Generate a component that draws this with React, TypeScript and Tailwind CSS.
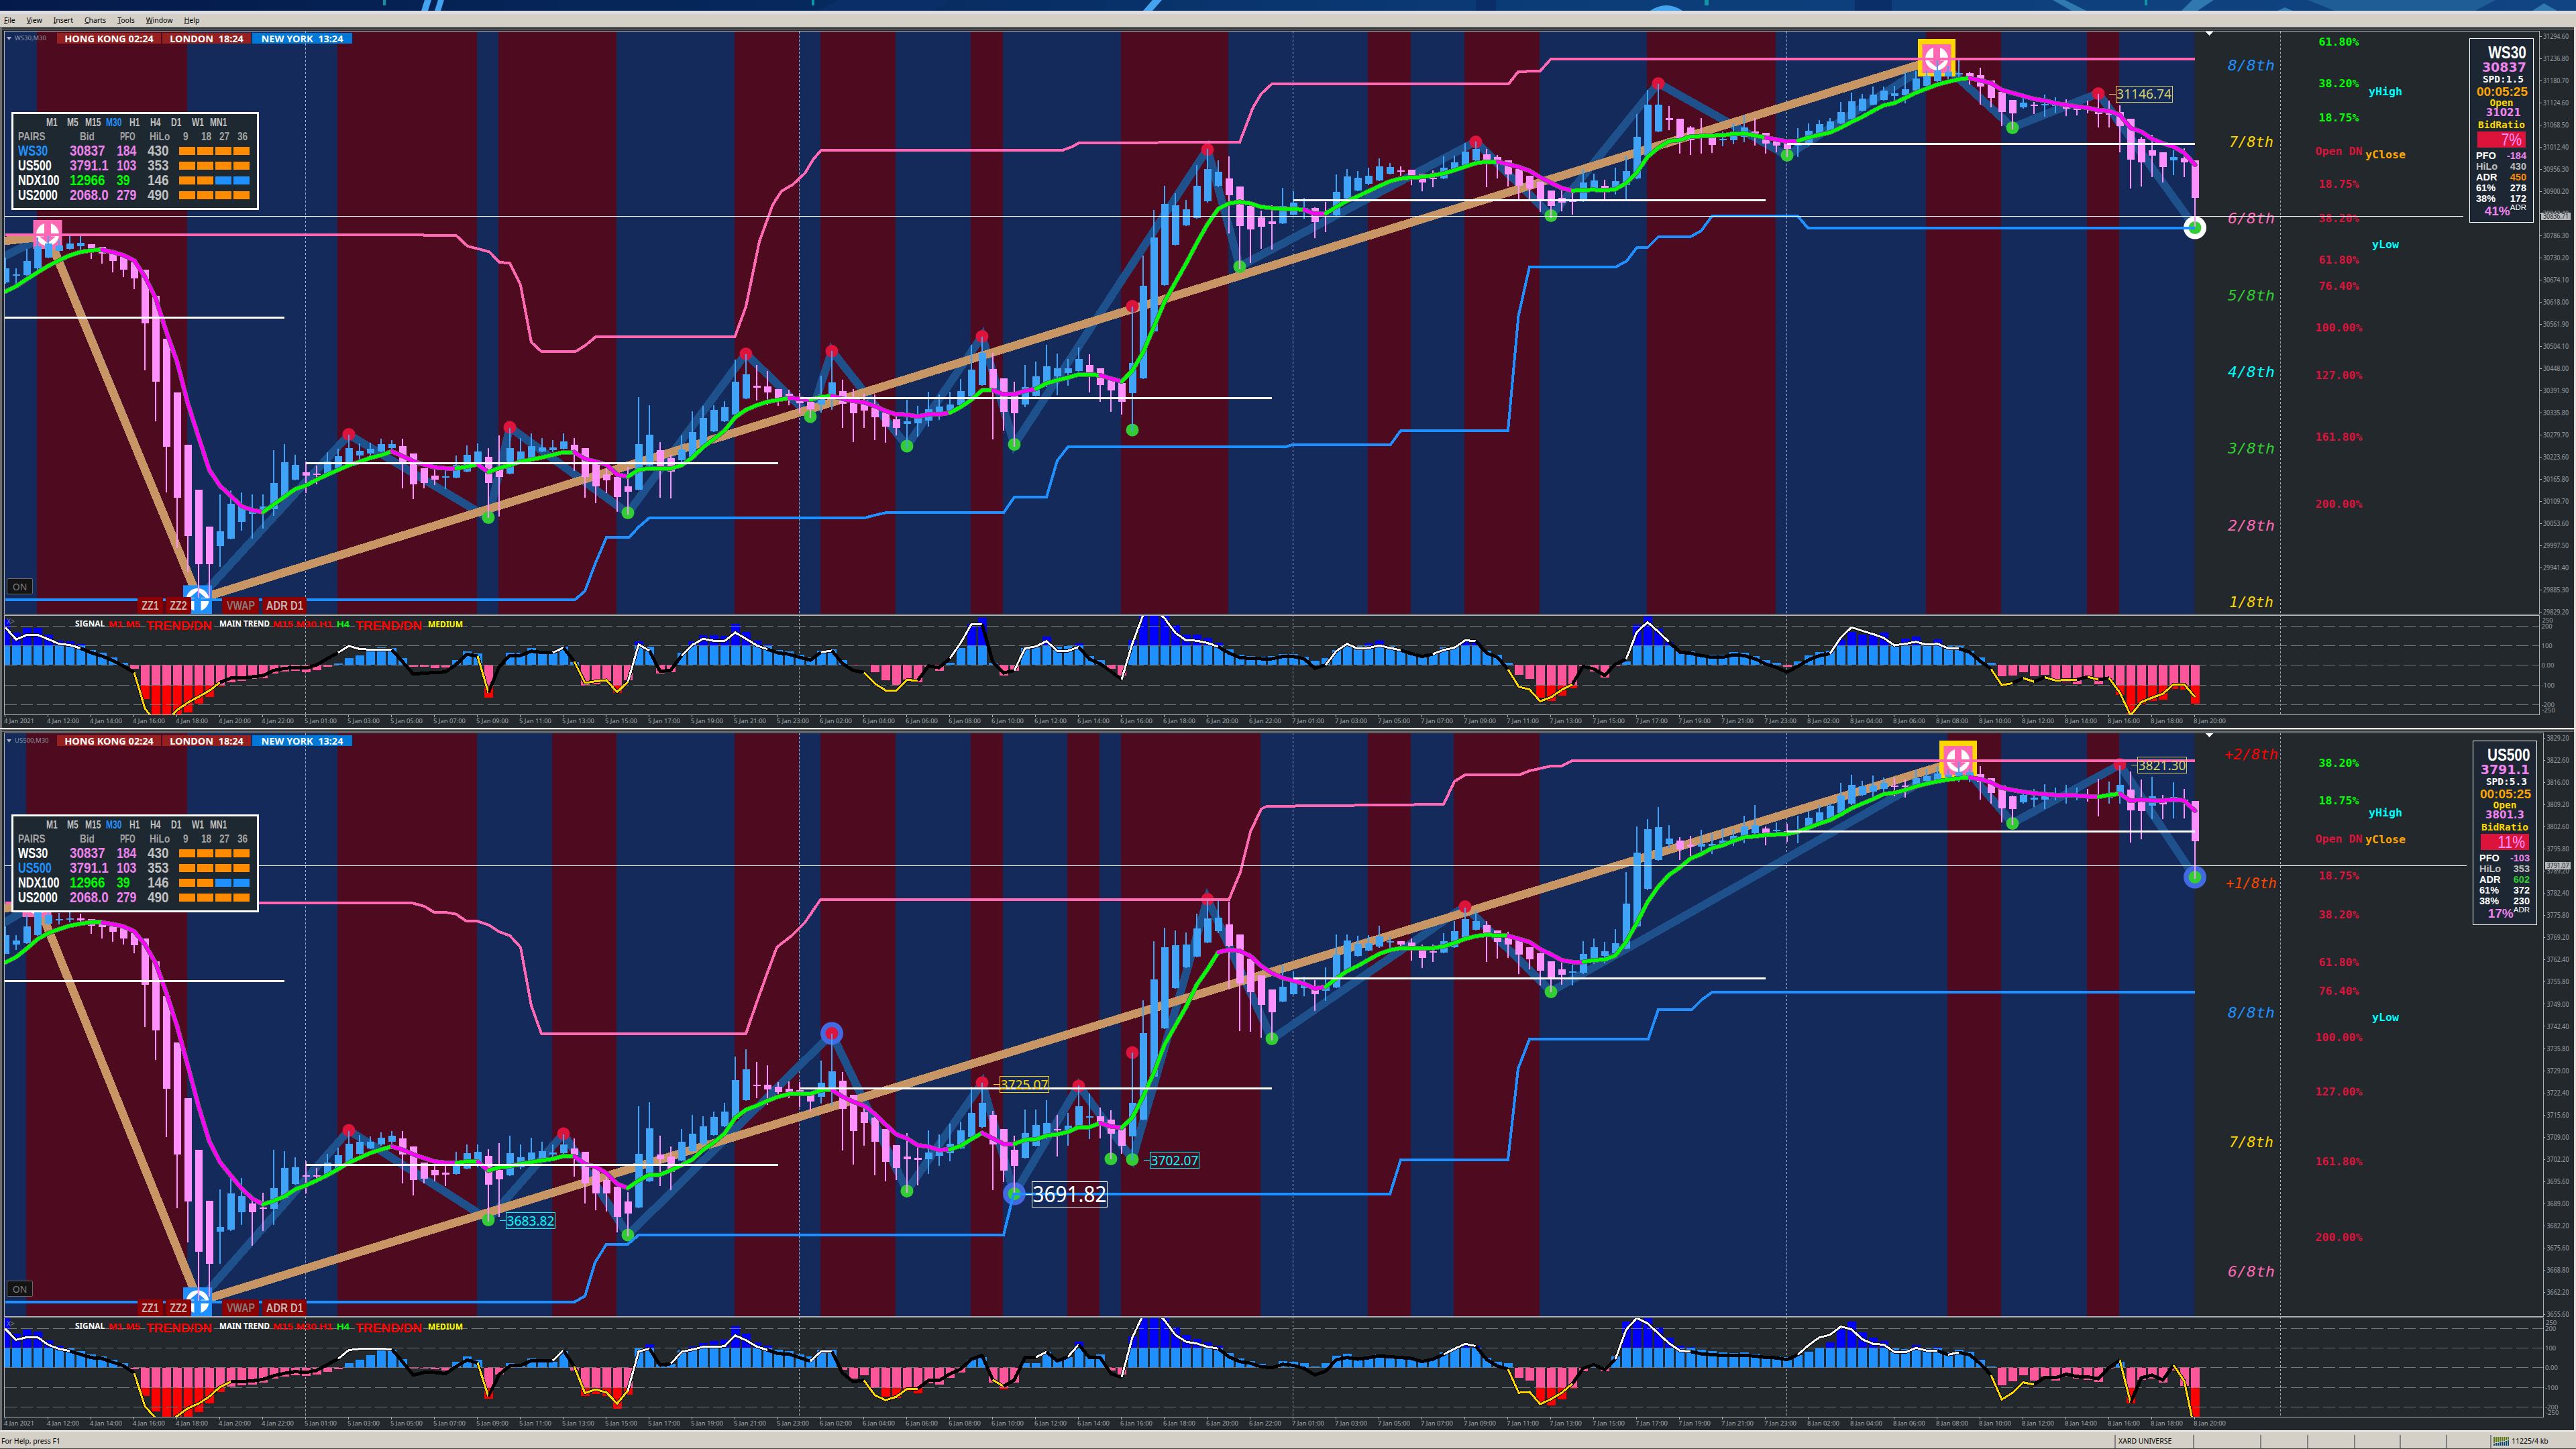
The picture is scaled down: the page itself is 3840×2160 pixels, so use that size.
import { clsx } from 'clsx'
import type { ReactNode } from 'react'

const SANS = '"Noto Sans", "Open Sans", sans-serif'
const ARIAL = '"Liberation Sans", Arial, sans-serif'
const MONO = '"DejaVu Sans Mono", monospace'

const COLORS: Record<string, string> = {
  g: '#00ff00',
  m: '#ff00ff',
  w: '#ffffff',
  k: '#000000',
  y: '#ffd700',
}

// Every block continues where the previous one stopped, one entry per M30 bar.
// y = base + value / scale
interface Block {
  base: number
  scale: number
  data: string
}

interface Candle {
  up: boolean
  high: number
  top: number
  bottom: number
  low: number
}

type Point = [number, number]

interface PriceTag {
  x: number
  y: number
  w: number
  h: number
  size: number
  color: string
  text: string
}

interface ChartConfig {
  symbol: string
  frameTop: number
  plotTop: number
  plotBottom: number
  subBottom: number
  right: number
  bands: Point[]
  candles: Block[]
  ma: Block[]
  hist: Block[]
  signal: Block[]
  levels: number[]
  upper: Point[]
  lower: Point[]
  major: Point[]
  minor: Point[]
  highs: Point[]
  lows: Point[]
  rings: [number, number, string][]
  opens: [number, number, number][]
  bid: number
  bidEnd: number
  bidText: string
  peak: Point
  start: Point
  bottomMark: Point
  tags: PriceTag[]
  murrey: [string, number, string, number][]
  fibs: [string, number, string][]
  yLabels: [string, number, string][]
  prices: string[]
  info: InfoData
}

interface InfoData {
  last: string
  spread: string
  open: string
  ratio: string
  pfo: string
  hilo: string
  adr: string
  adrClass: string
  r61: string
  r38: string
  pct: string
}

const barX = (i: number) => 8 + i * 16

function parseCandles(blocks: Block[]): Candle[] {
  return blocks.flatMap((b) =>
    b.data.trim().split(/\s+/).map((item) => {
      const [high, top, bottom, low] = item.slice(1).split(',').map((v) => b.base + Number(v) / b.scale)
      return { up: item[0] === 'u', high, top, bottom, low }
    })
  )
}

function parseValues(blocks: Block[]): number[] {
  return blocks.flatMap((b) => b.data.trim().split(/\s+/).map((v) => b.base + Number(v) / b.scale))
}

// A letter in the data switches the colour from the previous point on
function parseRuns(blocks: Block[]) {
  const runs: { color: string; points: Point[] }[] = []
  let last: Point | null = null
  let i = 0
  for (const b of blocks) {
    for (const token of b.data.trim().split(/\s+/)) {
      if (COLORS[token]) {
        runs.push({ color: COLORS[token], points: last ? [last] : [] })
        continue
      }
      last = [barX(i), b.base + Number(token) / b.scale]
      runs[runs.length - 1].points.push(last)
      i++
    }
  }
  return runs
}

const pts = (p: Point[]) => p.map(([x, y]) => `${x},${y.toFixed(1)}`).join(' ')

const ws30: ChartConfig = {
  symbol: 'WS30',
  frameTop: 40,
  plotTop: 47,
  plotBottom: 915,
  subBottom: 1065,
  right: 3785.5,
  bands: [[3, 17], [31, 44], [46, 57], [68, 74], [76, 83], [90, 93], [104, 114], [127, 131], [136, 143], [153, 165], [179, 186], [194, 197]],
  candles: [
    {
      base: 0, scale: 2.8,
      data: `u1075,1120,1180,1185 u1120,1145,1150,1187 u1040,1090,1147,1150 u990,1028,1120,1125 u985,1017,1075,1078 u1000,1025,1047,1050
      u985,1017,1038,1042 u985,1014,1028,1042 d1019,1019,1042,1080 d1030,1030,1058,1100 d1045,1052,1088,1137 d1060,1070,1126,1156
      d1090,1096,1162,1207 d1125,1126,1350,1546 d1235,1235,1592,1758 d1414,1414,1864,2055`,
    },
    {
      base: 560, scale: 2.904,
      data: `d73,73,528,745 d299,299,694,850 d494,494,815,960 d653,653,815,975 u514,674,738,828 u496,555,706,708 u505,560,633,671 u514,580,598,706
      u514,566,590,662 u322,465,578,607 u296,375,522,523 u343,386,450,453 d372,418,433,508 d388,424,430,470 u331,373,428,430 u317,348,400,402
      u256,314,378,380 u293,325,346,365 u290,317,337,348 u272,296,328,330 u278,296,314,330 d272,305,378,487 d337,337,470,534 d401,401,465,487
      d404,433,450,473 u401,436,440,490 u346,386,441,444 u302,343,415,418 u293,328,375,380 d314,351,465,615 d258,400,438,610 u226,314,425,427
      u270,328,380,382 u250,305,365,368 u270,311,328,330 u278,311,321,330 u250,285,317,320 d270,299,330,412 d314,314,438,528 d372,372,479,552
      d401,428,453,508 d438,438,526,590 d395,479,502,600 u93,296,494,497 u128,256,390,395 d287,322,395,528 d343,357,415,531 u258,320,365,390
      u154,244,357,360 u131,183,305,308 u128,148,241,244 u110,136,197,200`,
    },
    {
      base: 360, scale: 2.119,
      data: `u373,443,546,548 u355,420,495,497 d390,456,462,502 d409,458,477,516 d466,466,493,519 d468,481,492,516 d479,495,511,542 d506,506,530,558
      u424,483,515,540 u345,445,485,532 d436,473,513,589 d466,498,542,634 d480,502,534,589 d484,515,555,627 d530,540,585,636 d550,562,589,612
      u500,568,576,655 u519,550,574,617 u475,530,566,585 u484,521,545,563 u475,515,540,543 u434,473,517,520 u326,405,490,492 u300,351,453,455
      d352,403,464,625 d432,432,538,598 d443,487,542,648 u390,460,515,523 u379,426,487,490 u326,394,450,460 u354,400,426,485 u371,400,415,456
      u335,371,409,412 d356,390,418,477 d400,400,453,506 d432,432,470,538 d447,447,506,547 u205,384,479,600 u44,140,432,434`,
    },
    {
      base: 160, scale: 1.7043,
      data: `u260,330,570,572 u200,245,452,454 u218,249,349,351 u236,259,300,302 u147,199,281,283 u105,157,239,242 u135,164,199,202 d124,181,223,320
      d201,201,302,410 d250,251,310,395 d262,280,303,360 d249,290,297,361 u205,251,295,297 u213,242,273,275 u230,255,260,283 d254,256,291,332
      d240,266,270,317 u170,215,275,278 u157,176,231,233 u162,179,211,213 u154,174,194,197 u130,150,185,187 u141,152,168,170 d150,160,163,174
      d159,159,176,197 d168,168,191,213 d160,179,182,202 u125,154,181,183 u123,140,163,166 u90,112,147,148 u87,106,134,136`,
    },
    {
      base: 0, scale: 2.8,
      data: `d622,644,672,781 d647,655,685,745 d669,669,727,778 d705,705,775,832 d734,734,787,837 d758,758,835,885 d795,795,860,910 d795,826,846,882
      d800,836,843,896 u706,762,838,843 u725,753,790,795 d750,776,787,835 u700,756,787,812 u650,714,773,835 u476,571,745,748 u375,437,650,653
      u350,437,549,552 d443,493,500,543 d496,496,580,641 d527,532,585,647 d493,557,565,641 d560,570,605,638 u549,580,585,610 u515,560,585,602
      u482,532,571,594 d493,549,557,608 d554,554,599,641 d585,588,608,636 d590,590,622,655 u535,603,608,655 u515,546,605,608 u501,518,560,574
      u493,507,545,550 u426,468,515,518 u387,423,498,500 u392,412,462,465 u361,395,437,440 u361,378,417,420 u358,389,400,423 u300,372,397,431
      u297,328,378,381 u294,316,357,364 u252,294,339,342 u275,300,318,336 u252,305,311,322 d300,305,325,353 d283,314,361,437 d336,336,409,448
      d380,384,468,526 d417,417,473,540 u409,428,448,454 d426,437,442,476 u395,434,440,487 u406,437,440,470 d414,440,454,484 d437,445,459,482
      d420,448,450,473 d392,452,476,532 d420,468,479,532 d440,468,526,636 d496,496,666,787 d571,580,678,778 d563,627,650,739 d636,636,697,762
      u627,655,669,731 d619,661,678,739 d669,669,826,945`,
    },
  ],
  ma: [
    { base: 0, scale: 2.8, data: 'g 1217 1195 1165 1137 1110 1087 1066 1052 1045 1043 m 1052 1065 1087 1155 1245 1385 1510' },
    {
      base: 560, scale: 2.904,
      data: `120 265 408 477 520 565 582 591 g 558 525 491 476 450 429 408 388 373 356 344 328 m 348 370 385 397 401 401 g 394 384 m 418 g 400 388 372
      363 354 343 331 331 m 360 372 385 428 437 g 408 401 403 402 388 355 310 275 238 180 148 128 113 105 97`,
    },
    {
      base: 360, scale: 2.119,
      data: `m 497 500 g 491 488 m 497 504 508 520 535 546 547 553 546 546 541 g 523 500 470 470 m 483 483 472 466 g 448 438 430 420 421 422 m 433 442
      g 408 350 270 190 130 70 5`,
    },
    { base: 160, scale: 1.7043, data: '297 258 244 240 244 253 256 258 258 260 m 271 270 g 253 238 226 213 200 188 181 178 177 173 168 160 151 142 138 138' },
    {
      base: 0, scale: 2.8,
      data: `m 686 697 713 740 763 785 796 g 793 792 795 790 765 720 655 617 589 585 570 568 566 565 558 557 566 574 m 582 591 588 g 574 563 553 533 509
      488 463 440 430 409 387 370 353 341 331 326 m 336 347 375 388 400 413 420 431 438 445 450 460 463 480 534 549 580 598 612 638 688`,
    },
  ],
  hist: [
    {
      base: 560, scale: 2.904,
      data: `1055 1112 1091 1091 1121 1147 1149 1163 1188 1200 1221 1243 1269 1399 1467 1467 1467 1457 1420 1390 1346 1326 1320 1314 1309 1290 1281 1278
      1283 1275 1259 1246 1222 1211 1188 1176 1180 1222 1260 1260 1265 1262 1231 1193 1202 1393 1253 1199 1199 1179 1197 1197 1173 1240 1343 1335 1322
      1375 1318 1150 1173 1288 1283 1200 1150 1124 1124 1127 1074 1109 1147 1164 1188 1193 1208 1220 1190 1186`,
    },
    {
      base: 360, scale: 2.119,
      data: `1322 1340 1338 1361 1385 1401 1383 1393 1343 1357 1331 1284 1207 1189 1330 1370 1357 1285 1283 1249 1279 1278 1269 1309 1322 1350 1372 1259
      1180 1180 1180 1212 1242 1241 1253 1268 1288 1306 1309 1312 1309 1303 1304 1312 1324 1316 1290 1275 1278 1270 1261 1277 1288 1300 1308 1298 1282
      1280 1266 1265 1293 1305`,
    },
    {
      base: 160, scale: 1.7043,
      data: `1411 1441 1452 1500 1508 1495 1476 1420 1433 1449 1420 1408 1314 1293 1325 1358 1382 1383 1390 1391 1391 1384 1385 1394 1405 1412 1422 1408
      1392 1384 1380 1352 1333 1339 1340 1335 1362 1350 1345 1362 1351 1366 1368 1380 1397 1411 1446 1444 1435 1446 1442 1452 1460 1466 1452 1466 1455
      1493 1540 1515 1509 1505 1478 1480 1515`,
    },
  ],
  signal: [
    {
      base: 560, scale: 2.904,
      data: `w 1090 1142 1122 1122 1141 1161 1166 1180 k 1199 1214 1233 1257 1285 y 1440 1500 1500 1447 1415 1390 1364 1328 k 1309 1309 1304 1298 1276
      1267 1264 1266 1252 1225 1199 w 1170 1183 1186 1186 1186 k 1238 1292 1288 1285 1283 1250 1206 1214 y 1372 k 1260 1211 1211 1193 1198 1199 w 1177
      k 1237 y 1330 1323 1318 1370 1325 w 1164 1190 k 1280 1275 1212 w 1166 1139 1148 1149 1112 1139 1168 1184 k 1200 1206 1219 1232 1197 w 1190`,
    },
    {
      base: 360, scale: 2.119,
      data: `k 1333 1355 1361 y 1396 1418 1418 1385 1387 k 1341 1346 1317 w 1268 1209 1209 k 1328 1363 1355 w 1285 1279 1262 1293 1293 1281 k 1319 1334
      1358 1383 w 1270 1180 1160 1190 1236 1260 1261 1268 1280 k 1300 1314 1317 1318 1318 1311 1311 1318 1348 1338 w 1294 1271 1286 1284 1276 1284 1291
      k 1302 1311 1303 w 1290 1283 1260 1262 k 1300 1313`,
    },
    {
      base: 160, scale: 1.7043,
      data: `1428 y 1472 1479 1509 1499 1480 1466 k 1420 1427 1443 1415 1402 w 1333 1308 1332 1358 k 1384 1387 1393 1397 1397 1391 1393 1401 1414 1423
      1435 1420 1404 1393 1388 w 1347 1321 1330 1338 1348 1367 1363 1358 1365 1363 1374 1375 k 1384 1407 1427 y 1468 1463 k 1450 y 1459 k 1448 y 1456
      1455 1454 k 1447 y 1454 k 1450 y 1487 1545 1511 1500 1490 1466 1466 1498`,
    },
  ],
  levels: [933.4, 962.3, 991.3, 1021.5, 1050.4],
  upper: [
    [8, 350], [631, 350], [632, 351], [680, 351], [697, 367], [712, 370.7], [729.5, 375.4], [744, 390.7], [760, 392.5], [776, 425], [792, 510], [807, 524],
    [858, 524], [873, 514.6], [888, 502], [1095.5, 502], [1112, 457], [1132, 360], [1152, 305], [1165, 285], [1182, 275], [1200, 258], [1212, 238],
    [1224, 224], [1584, 224], [1600, 218], [1608, 213], [1848, 212], [1868, 160], [1880, 140], [1896, 125], [2249, 125], [2263, 107], [2296, 105.7],
    [2312, 87.8], [3272, 87.8],
  ],
  lower: [
    [8, 894], [857, 894], [872, 881], [887, 841], [904, 801], [938, 801], [952, 785.6], [968, 772], [1289, 772], [1304, 768], [1320, 764.4], [1496, 764.4],
    [1512, 741], [1560, 741], [1576, 686.6], [1592, 666], [1917, 666], [1928, 662.5], [2073, 662.5], [2088, 642], [2248, 642], [2263.5, 471],
    [2280, 397.8], [2409, 397.8], [2425, 389], [2440, 369], [2456, 369], [2472, 353], [2520, 353], [2536, 344], [2552, 322], [2680, 322], [2695, 340],
    [3272, 340],
  ],
  major: [[-10, 361], [72, 352], [296, 893], [2888, 88]],
  minor: [
    [-10, 390], [72, 350], [296, 893], [520, 648], [728, 772], [760, 637], [936, 765], [1112, 527], [1208, 621], [1240, 523], [1352, 665], [1464, 501],
    [1512, 663], [1800, 222], [1848, 397], [2200, 211], [2312, 322], [2472, 124], [2664, 232], [2888, 88], [3000, 190], [3128, 139], [3272, 339],
  ],
  highs: [[520, 647.5], [760, 637], [1112, 527.5], [1240, 523.5], [1464, 501.5], [1688, 456.5], [1800, 223], [2200, 211.5], [2472, 124.5], [3128, 139.5]],
  lows: [[728, 771.5], [936, 764.5], [1208, 621], [1352, 665], [1512, 662.5], [1688, 641], [1848, 397.5], [2312, 321.5], [2664, 231.5], [3000, 190.5], [3272, 339.5]],
  rings: [[3272, 339.5, '#ffffff']],
  opens: [[7, 424, 473.6], [456, 1160, 690.5], [1192, 1896, 593.6], [1928, 2632, 298.5], [2664, 3272, 214.5]],
  bid: 322.5,
  bidEnd: 3672,
  bidText: '30836.71',
  peak: [2887, 87.5],
  start: [71, 349.5],
  bottomMark: [294.5, 894],
  tags: [{ x: 3154, y: 128, w: 84, h: 24.5, size: 20, color: '#d6cf66', text: '31146.74' }],
  murrey: [
    ['8/8th', 97, '#1e90ff', 3321], ['7/8th', 211, '#ffd700', 3323], ['6/8th', 325.5, '#ff69b4', 3321], ['5/8th', 440, '#32cd32', 3321],
    ['4/8th', 554, '#00ffff', 3321], ['3/8th', 668, '#32cd32', 3321], ['2/8th', 783, '#ff69b4', 3321], ['1/8th', 897, '#ffd700', 3323],
  ],
  fibs: [
    ['61.80%', 62.5, '#00ff00'], ['38.20%', 124.5, '#00ff00'], ['18.75%', 175.5, '#00ff00'], ['Open DN', 225.7, '#dc143c'], ['18.75%', 274, '#dc143c'],
    ['38.20%', 325, '#dc143c'], ['61.80%', 387, '#dc143c'], ['76.40%', 426, '#dc143c'], ['100.00%', 488.3, '#dc143c'], ['127.00%', 559.3, '#dc143c'],
    ['161.80%', 651, '#dc143c'], ['200.00%', 751, '#dc143c'],
  ],
  yLabels: [['yHigh', 136, '#00ffff'], ['yClose', 230.5, '#ffa500'], ['yLow', 364.7, '#00ffff']],
  prices: [
    '31294.60', '31236.80', '31180.70', '31124.60', '31068.50', '31012.40', '30956.30', '30900.20', '30842.40', '30786.30', '30730.20', '30674.10',
    '30618.00', '30561.90', '30504.10', '30448.00', '30391.90', '30335.80', '30279.70', '30223.60', '30165.80', '30109.70', '30053.60', '29997.50',
    '29941.40', '29885.30', '29829.20',
  ],
  info: {
    last: '30837', spread: '1.5', open: '31021', ratio: '7%', pfo: '-184', hilo: '430', adr: '450', adrClass: 'text-[#ff8c00]', r61: '278', r38: '172',
    pct: '41%',
  },
}

const us500: ChartConfig = {
  symbol: 'US500',
  frameTop: 1087,
  plotTop: 1093,
  plotBottom: 1962,
  subBottom: 2112,
  right: 3791,
  bands: [[2, 17], [31, 44], [51, 57], [68, 74], [76, 83], [90, 93], [99, 102], [104, 117], [127, 131], [135, 143], [181, 186], [194, 197]],
  candles: [
    {
      base: 1060, scale: 3,
      data: `u962,1002,1085,1087 u1002,1026,1043,1067 u910,963,1037,1040 u880,890,1001,1004 u895,912,951,957 u903,930,933,954 u900,928,933,945
      d906,927,936,950 d930,930,960,996 d950,954,966,1017 d960,962,987,1032 d970,972,1017,1044 d990,993,1047,1083 d1016,1017,1223,1412
      d1119,1119,1429,1560 d1275,1275,1690,1905`,
    },
    {
      base: 1480, scale: 2.306,
      data: `d170,171,556,740 d362,362,717,858 d540,540,891,1058 d715,715,932,1045 u676,805,822,932 u632,689,815,818 u637,699,754,797 d705,723,754,869
      d687,738,742,819 u540,671,742,797 u544,602,705,708 u565,600,657,660 d579,627,630,689 d602,627,632,643 u554,584,628,630 u533,558,606,608
      u475,519,583,585 u489,512,553,556 u493,512,535,538 u480,498,522,526 u475,491,512,535 d475,500,556,655 d528,528,643,696 d583,583,639,655
      d590,609,627,648 d590,618,625,664 u547,588,623,626 u521,551,604,606 u521,546,595,600 d537,560,659,787 d517,609,641,770 u491,551,627,630
      u521,565,600,606 u498,549,580,584 u512,544,570,574 u521,549,556,565 u487,521,552,556 d500,535,558,632 d546,546,655,724 d602,602,689,747
      d632,643,689,752 d666,666,770,823 d684,717,759,836 u390,553,738,740 u376,466,648,650 d491,556,572,664 d528,563,616,678 u468,512,576,579
      u420,484,544,546 u424,459,520,523 u408,427,489,491 u378,408,459,461 u220,300,434,436 u194,263,369,371 d238,316,318,362 d249,316,332,385
      d307,323,341,355 d304,330,341,362 d307,334,341,392 d341,346,374,408`,
    },
    {
      base: 1320, scale: 1.96,
      data: `u512,576,617,637 u434,543,590,643 d545,570,653,774 d612,612,717,815 d645,662,694,760 d677,678,749,847 d711,711,808,864 d758,759,825,860
      d723,792,799,898 d762,796,801,876 u715,780,800,843 u727,770,790,819 u696,755,782,806 u690,715,768,770 u588,664,735,738 u577,635,706,709
      d659,670,757,890 d711,711,833,866 d731,772,819,901 u655,723,796,798 u655,700,760,763 u627,694,737,740 d670,711,715,792 u664,702,720,760
      u585,645,706,708 u608,674,677,741 d649,674,694,739 d657,684,725,800 d706,708,760,784 u488,635,733,803 u335,431,684,686 u163,274,558,561
      u123,180,417,419 u131,174,300,302 u138,172,239,241 u82,125,207,210 u42,96,167,169 u42,94,133,139 d48,114,176,302 d143,143,286,425
      d212,214,312,427 d262,263,349,445 d303,304,370,453 u233,296,339,341 u250,278,318,320 u266,288,300,323 d276,300,318,367 u239,293,308,337
      u143,202,298,300 u143,160,250,252 u147,171,206,208 u145,168,190,192 u118,149,179,182 u151,163,167,184 d163,163,172,180 d155,167,178,220
      d173,176,212,241 d172,193,196,223 u139,163,196,198 u104,133,180,182 u64,98,155,157 u74,104,129,131 d104,116,142,223 d131,131,165,214
      d135,151,172,212`,
    },
    {
      base: 1100, scale: 1.4792,
      data: `d445,445,478,520 d462,462,488,510 d474,475,513,546 d492,493,528,560 d495,510,522,544 u500,515,518,546 u448,476,518,520 u442,462,496,499
      u449,470,481,497 u422,453,475,478 u296,365,464,466 u195,253,415,418 u179,201,333,336 u152,197,269,271 u192,222,234,243 d219,226,246,269
      d216,235,240,262 u203,234,239,251 u211,234,238,256 u200,226,235,243 u201,216,226,238 u172,195,217,232 u148,192,210,213 d195,200,210,237
      u186,203,206,216 d190,205,208,229 u171,202,208,232 u161,176,200,205 u148,164,186,189 u144,150,178,181 u99,127,165,168 u81,104,145,148
      u95,107,125,128 u83,105,119,130 u88,99,112,125 d89,105,108,129 d91,105,108,132 u71,89,105,108 u68,84,95,103 u62,78,92,95 u70,82,86,98
      u53,75,86,98 u68,76,86,97 d62,80,98,136 d89,89,122,145 d104,105,155,186 d127,129,157,192 u121,126,142,145 u112,132,136,152 u102,124,136,157
      u109,127,129,138 u104,127,129,145 u110,126,128,137 d113,124,126,140 d90,124,127,173 u96,122,131,145 u60,104,125,145 d74,114,160,231
      d92,135,161,223 u86,129,149,179 d126,141,146,179 u98,130,133,178 d112,136,139,178 d139,139,228,311`,
    },
  ],
  ma: [
    { base: 1060, scale: 3, data: 'g 1124 1100 1062 1020 993 975 960 951 944 945 m 953 963 985 1043 1127 1260' },
    {
      base: 1480, scale: 2.306,
      data: `115 250 390 510 582 628 672 707 727 g 715 700 676 662 645 627 606 584 567 551 539 528 m 539 555 568 580 584 585 g 580 580 m 611 g 600 596 588
      582 576 571 561 562 m 588 598 620 657 671 g 645 625 625 610 592 573 540 515 484 430 402 388 371 357 348 347 347`,
    },
    {
      base: 1320, scale: 1.96,
      data: `598 597 m 617 632 643 667 698 727 739 759 763 773 771 g 761 741 723 m 739 755 755 g 743 742 731 727 720 706 706 694 m 704 708 g 678 617 548
      465 410 355 290 245 195 m 188 191 206 235 256 270 278 287 301 296 g 272 250 235 217 200 189 183 183 183 183 178 168 156 148 144 146 147`,
    },
    {
      base: 1100, scale: 1.4792,
      data: `m 443 450 466 477 490 494 494 g 490 489 480 450 408 362 328 302 286 266 256 243 237 227 219 217 214 213 212 207 198 189 181 169 155 145 135
      124 121 115 107 101 96 92 89 87 m 91 98 110 115 119 122 124 126 127 127 129 130 g 126 123 m 139 136 138 138 136 138 161`,
    },
  ],
  hist: [
    {
      base: 1480, scale: 2.306,
      data: `1118 1171 1157 1164 1194 1214 1222 1231 1244 1251 1261 1274 1294 1385 1438 1457 1457 1457 1441 1411 1371 1354 1349 1347 1339 1326 1319 1314
      1316 1312 1303 1293 1273 1261 1245 1228 1227 1259 1291 1291 1294 1298 1268 1250 1262 1396 1312 1273 1275 1257 1264 1268 1232 1298 1387 1380 1385
      1430 1381 1222 1208 1277 1275 1229 1215 1204 1197 1192 1147 1171 1201 1213 1226 1231 1242 1251`,
    },
    {
      base: 1320, scale: 1.96,
      data: `1357 1356 1415 1440 1430 1468 1493 1497 1478 1483 1455 1458 1439 1423 1385 1378 1453 1471 1452 1396 1396 1363 1385 1377 1333 1375 1370 1417
      1428 1317 1263 1263 1263 1292 1313 1325 1335 1344 1366 1382 1389 1398 1403 1390 1391 1396 1405 1396 1373 1368 1379 1375 1370 1374 1380 1383 1389
      1381 1364 1350 1342 1345 1379 1391`,
    },
    {
      base: 1100, scale: 1.4792,
      data: `1379 1411 1417 1468 1472 1459 1435 1397 1386 1397 1364 1287 1280 1280 1300 1323 1340 1343 1349 1352 1355 1356 1355 1358 1362 1364 1366 1361
      1354 1345 1333 1300 1287 1311 1323 1330 1346 1347 1339 1345 1343 1355 1349 1353 1371 1386 1427 1419 1405 1417 1408 1417 1408 1413 1416 1420 1390
      1375 1467 1416 1413 1422 1395 1429 1497`,
    },
  ],
  signal: [
    {
      base: 1480, scale: 2.306,
      data: `w 1155 1193 1184 1184 1210 1224 1231 k 1243 1254 1257 1270 1282 1307 y 1421 1462 1480 1455 1428 1412 1388 1355 1337 k 1336 1334 1329 1316
      1308 1302 1305 1298 1278 1258 w 1228 1224 1223 1224 1225 k 1268 1314 1305 1305 1309 1285 1262 1272 y 1388 k 1312 1282 1282 1264 1264 1264 w 1229
      k 1284 y 1376 1363 1374 1412 1367 w 1233 1223 k 1280 1275 w 1234 1226 1217 1216 1215 1178 1194 1216 1228 k 1240 1242 1254 1266`,
    },
    {
      base: 1320, scale: 1.96,
      data: `w 1361 1361 k 1425 1450 1446 y 1489 1504 1494 1471 1470 k 1446 1446 1427 1413 1384 1373 1445 y 1463 k 1445 1378 1378 w 1363 k 1389 1377
      w 1341 k 1379 1379 1426 1437 w 1320 1255 1240 1270 1313 1333 1338 1348 1353 k 1377 1391 1396 1406 1409 1399 1402 1411 1430 1419 1386 1379 1384
      1380 1374 1377 1379 1382 1391 1384 1370 w 1354 1339 1346 k 1385 1404`,
    },
    {
      base: 1100, scale: 1.4792,
      data: `1392 y 1444 1442 1469 1458 1444 1424 k 1390 1382 1393 1370 w 1305 1279 1291 1313 1335 1351 1353 k 1358 1360 1362 1361 1361 1363 1366 1367
      1371 1360 w 1339 1322 1316 1298 1304 1326 1336 1338 1354 1355 1345 1351 1351 k 1360 w 1355 k 1360 1380 1405 y 1459 1444 1421 1426 k 1410 1411
      1403 1408 1409 1413 1388 1372 y 1466 k 1411 1405 1416 1383 y 1418 1530`,
    },
  ],
  levels: [1980.4, 2009.4, 2038.5, 2068.5, 2097.5],
  upper: [
    [8, 1346], [614, 1346], [633, 1351], [647, 1360], [664, 1360], [680, 1362.7], [695, 1373], [711, 1373], [729, 1379], [744, 1389], [760, 1394.7],
    [776, 1412], [792, 1499], [807, 1540.7], [1112, 1540.7], [1127, 1497], [1144, 1450], [1158, 1412], [1180, 1395], [1200, 1375], [1223, 1341],
    [1832, 1341], [1849, 1300], [1864, 1240], [1880, 1206], [1888, 1202], [2152, 1199], [2168, 1165], [2184, 1155], [2265, 1155], [2280, 1149],
    [2312, 1142], [2328, 1142], [2344, 1133.8], [3272, 1133.8],
  ],
  lower: [
    [8, 1940.5], [857, 1940.5], [872, 1932], [887, 1882], [904, 1854.7], [936, 1854.7], [952, 1841], [1496, 1841], [1511, 1780], [2072, 1780],
    [2088, 1729], [2248, 1729], [2263, 1593], [2280, 1549], [2457, 1549], [2472, 1505], [2522, 1505], [2537, 1490], [2552, 1479.3], [3272, 1479.3],
  ],
  major: [[-10, 1357], [56, 1346], [296, 1940], [2920, 1134]],
  minor: [
    [-10, 1385], [56, 1346], [296, 1940], [520, 1685], [728, 1818], [840, 1690], [936, 1841], [1240, 1541], [1352, 1775], [1464, 1614], [1512, 1780],
    [1608, 1618], [1688, 1728], [1800, 1340], [1896, 1549], [2184, 1351], [2312, 1478], [2920, 1134], [3000, 1227], [3160, 1140], [3272, 1308],
  ],
  highs: [[520, 1685], [840, 1690], [1240, 1540.5], [1464, 1614], [1608, 1619], [1688, 1569], [1800, 1340.5], [2184, 1351.5], [3160, 1139.5]],
  lows: [[728, 1818.5], [936, 1841], [1352, 1775.5], [1512, 1779.5], [1656, 1727.5], [1688, 1728.5], [1896, 1548.5], [2312, 1478.5], [3000, 1227.5], [3272, 1307.5]],
  rings: [[1240, 1540.5, '#4169e1'], [1512, 1779.5, '#4169e1'], [3272, 1307.5, '#4169e1']],
  opens: [[7, 424, 1462.3], [456, 1160, 1736.3], [1192, 1896, 1622.3], [1928, 2632, 1458.3], [2664, 3272, 1239.3]],
  bid: 1290.5,
  bidEnd: 3677,
  bidText: '3791.07',
  peak: [2919, 1133.5],
  start: [55, 1345.5],
  bottomMark: [294.5, 1940.5],
  tags: [
    { x: 754.5, y: 1807.5, w: 73, h: 24, size: 20, color: '#00ffff', text: '3683.82' },
    { x: 1490.5, y: 1604.5, w: 73, h: 24, size: 20, color: '#ffd700', text: '3725.07' },
    { x: 1714.5, y: 1717.5, w: 73, h: 24, size: 20, color: '#00ffff', text: '3702.07' },
    { x: 1538.5, y: 1761.5, w: 112, h: 38, size: 32, color: '#ffffff', text: '3691.82' },
    { x: 3186.5, y: 1128.5, w: 73, h: 24, size: 20, color: '#d6cf66', text: '3821.30' },
  ],
  murrey: [
    ['+2/8th', 1124, '#ff0000', 3316], ['+1/8th', 1316.5, '#ff4500', 3318], ['8/8th', 1509, '#1e90ff', 3321], ['7/8th', 1702, '#ffd700', 3323],
    ['6/8th', 1895, '#ff69b4', 3321],
  ],
  fibs: [
    ['38.20%', 1137, '#00ff00'], ['18.75%', 1193.7, '#00ff00'], ['Open DN', 1250.4, '#dc143c'], ['18.75%', 1305.6, '#dc143c'], ['38.20%', 1363, '#dc143c'],
    ['61.80%', 1434, '#dc143c'], ['76.40%', 1477, '#dc143c'], ['100.00%', 1546.5, '#dc143c'], ['127.00%', 1627, '#dc143c'], ['161.80%', 1730.8, '#dc143c'],
    ['200.00%', 1844, '#dc143c'],
  ],
  yLabels: [['yHigh', 1211, '#00ffff'], ['yClose', 1251.7, '#ffa500'], ['yLow', 1516.5, '#00ffff']],
  prices: [
    '3829.20', '3822.60', '3816.00', '3809.20', '3802.60', '3795.80', '3789.20', '3782.40', '3775.80', '3769.20', '3762.40', '3755.80', '3749.00',
    '3742.40', '3735.80', '3729.00', '3722.40', '3715.60', '3709.00', '3702.20', '3695.60', '3689.00', '3682.20', '3675.60', '3668.80', '3662.20', '3655.60',
  ],
  info: {
    last: '3791.1', spread: '5.3', open: '3801.3', ratio: '11%', pfo: '-103', hilo: '353', adr: '602', adrClass: 'text-[#32cd32]', r61: '372', r38: '230',
    pct: '17%',
  },
}

const daySeparators = [28, 74, 120, 166, 212]

const timeLabels = Array.from({ length: 52 }, (_, n) => {
  const i = n * 4
  if (i === 0) return '4 Jan 2021'
  const [day, first, hour] = i < 28 ? [4, 0, 10] : i < 76 ? [5, 28, 1] : i < 120 ? [6, 76, 2] : i < 168 ? [7, 120, 1] : [8, 168, 2]
  return `${day} Jan ${String(hour + (i - first) / 2).padStart(2, '0')}:00`
})

interface LabelProps {
  x: number
  y: number
  w?: number
  size: number
  fill: string
  font?: string
  bold?: boolean
  italic?: boolean
  anchor?: 'start' | 'middle'
  children: string
}

// y is the middle of the capitals
function Label({ x, y, w, size, fill, font = SANS, bold, italic, anchor = 'start', children }: LabelProps) {
  return (
    <text
      x={x}
      y={y + size * 0.36}
      fill={fill}
      fontSize={size}
      fontFamily={font}
      fontWeight={bold ? 700 : 400}
      fontStyle={italic ? 'italic' : 'normal'}
      textAnchor={anchor}
      textLength={w}
      lengthAdjust="spacingAndGlyphs"
    >
      {children}
    </text>
  )
}

function ArrowMark({ at, color, up, framed }: { at: Point; color: string; up?: boolean; framed?: boolean }) {
  return (
    <g transform={`translate(${at[0]} ${at[1]})`}>
      {framed && <rect x={-28} y={-29.5} width={56} height={56} fill="#ffd700" />}
      <rect x={-21.5} y={-21.5} width={43} height={43} fill={color} />
      <g transform={up ? 'scale(1 -1)' : undefined}>
        <circle r={17} fill="#fff" />
        <path d="M-5 -18H5V3H12L0 13L-12 3H-5Z" fill={color} />
        <path d="M-18 -1H18V2H-18Z" fill={color} />
      </g>
    </g>
  )
}

function Histogram({ chart }: { chart: ChartConfig }) {
  const [, plus, zero, minus] = chart.levels
  return (
    <>
      {parseValues(chart.hist).map((y, i) => {
        const x = barX(i) - 6.5
        if (y < zero) {
          return (
            <g key={i}>
              <rect x={x} y={Math.max(y, plus)} width={13} height={zero - Math.max(y, plus)} fill="#1e90ff" />
              {y < plus && <rect x={x} y={y} width={13} height={plus - y} fill="#0000ff" />}
            </g>
          )
        }
        return (
          <g key={i}>
            <rect x={x} y={zero} width={13} height={Math.min(y, minus) - zero} fill="#ff559b" />
            {y > minus && <rect x={x} y={minus} width={13} height={y - minus} fill="#ff0000" />}
          </g>
        )
      })}
    </>
  )
}

function ChartCanvas({ chart }: { chart: ChartConfig }) {
  const { plotTop, plotBottom, subBottom, right, levels } = chart
  const subTop = plotBottom + 3
  const candles = parseCandles(chart.candles)
  const signal = parseRuns(chart.signal)
  const ma = parseRuns(chart.ma)
  const plotId = `plot-${chart.symbol}`
  const subId = `sub-${chart.symbol}`
  const priceStep = (plotBottom - 2.6 - (plotTop + 7.5)) / 26

  return (
    <svg
      className="block h-[1047px] w-[3840px]"
      viewBox={`0 ${chart.frameTop} 3840 1047`}
      shapeRendering="crispEdges"
    >
      <defs>
        <clipPath id={plotId}>
          <rect x={7} y={plotTop} width={right - 7} height={plotBottom - plotTop} />
        </clipPath>
        <clipPath id={subId}>
          <rect x={7} y={subTop} width={right - 7} height={subBottom - subTop} />
        </clipPath>
      </defs>

      <g clipPath={`url(#${plotId})`}>
        <rect x={7} y={plotTop} width={3264} height={plotBottom - plotTop} fill="#142a5a" />
        {chart.bands.map(([from, to]) => (
          <rect key={from} x={from * 16 + 7} y={plotTop} width={(to - from) * 16} height={plotBottom - plotTop} fill="#4e0a1e" />
        ))}
      </g>

      {daySeparators.map((i) => (
        <path key={i} d={`M${barX(i) - 0.5} ${plotTop}V${subBottom}`} stroke="#a9b4cc" strokeWidth={1} strokeDasharray="3 3" />
      ))}

      {/* price pane */}
      <g clipPath={`url(#${plotId})`}>
        <polyline points={pts(chart.minor)} fill="none" stroke="#1e508c" strokeWidth={12} />
        <polyline points={pts(chart.major)} fill="none" stroke="#c89664" strokeWidth={12.5} />
        <g shapeRendering="auto">
          {chart.rings.map(([x, y, color]) => (
            <circle key={x} cx={x} cy={y} r={17} fill={color} />
          ))}
          {chart.highs.map(([x, y]) => (
            <circle key={`${x}-${y}`} cx={x} cy={y} r={9.5} fill="#dc143c" />
          ))}
          {chart.lows.map(([x, y]) => (
            <circle key={`${x}-${y}`} cx={x} cy={y} r={9.5} fill="#32cd32" />
          ))}
          <ArrowMark at={chart.peak} color="#ff69b4" framed />
          <ArrowMark at={chart.start} color="#ff69b4" />
          <ArrowMark at={chart.bottomMark} color="#1e90ff" up />
        </g>
        {candles.map((c, i) => {
          const color = c.up ? '#3fa4f7' : '#ff90ff'
          return (
            <g key={i} fill={color}>
              <rect x={barX(i) - 1} y={c.high} width={2} height={c.low - c.high} />
              <rect x={barX(i) - 5.5} y={c.top} width={11} height={Math.max(c.bottom - c.top, 2)} />
            </g>
          )
        })}
        <polyline points={pts(chart.upper)} fill="none" stroke="#ff69b4" strokeWidth={4} />
        <polyline points={pts(chart.lower)} fill="none" stroke="#1e90ff" strokeWidth={4} />
        {ma.map((run, i) => (
          <polyline key={i} points={pts(run.points)} fill="none" stroke="#5f6b60" strokeWidth={7} strokeLinejoin="round" strokeLinecap="round" />
        ))}
        {ma.map((run, i) => (
          <polyline key={i} points={pts(run.points)} fill="none" stroke={run.color} strokeWidth={5} strokeLinejoin="round" strokeLinecap="round" />
        ))}
        {chart.opens.map(([x1, x2, y]) => (
          <path key={x1} d={`M${x1} ${y}H${x2}`} stroke="#fff" strokeWidth={3} />
        ))}
        {chart.tags.map((t) => (
          <g key={t.text}>
            <rect x={t.x} y={t.y} width={t.w} height={t.h} fill="none" stroke={t.color} strokeWidth={1} />
            <path d={`M${t.x - 10} ${t.y + t.h / 2}H${t.x}`} stroke={t.color} strokeWidth={1} />
            <Label x={t.x + 1} y={t.y + t.h / 2} w={t.w - 2} size={t.size} fill={t.color}>
              {t.text}
            </Label>
          </g>
        ))}
        {chart.murrey.map(([text, y, color, x]) => (
          <Label key={text} x={x} y={y} w={(3356 - x) * 2} size={22} fill={color} font={MONO} italic>
            {text}
          </Label>
        ))}
        {chart.fibs.map(([text, y, color]) => (
          <Label key={y} x={3486.5} y={y} w={text.length * 10} size={16} fill={color} font={MONO} bold anchor="middle">
            {text}
          </Label>
        ))}
        {chart.yLabels.map(([text, y, color]) => (
          <Label key={text} x={3556} y={y} w={text.length * 10} size={16} fill={color} font={MONO} bold anchor="middle">
            {text}
          </Label>
        ))}
        <path d={`M7 ${chart.bid}H${chart.bidEnd}`} stroke="#fff" strokeWidth={1} />
        <path d={`M3287 ${plotTop}H3299L3293 ${plotTop + 6}Z`} fill="#fff" />
      </g>

      {/* indicator pane */}
      <g clipPath={`url(#${subId})`}>
        <Histogram chart={chart} />
        {levels.map((y) => (
          <path key={y} d={`M7 ${y}H${right}`} stroke="#74797d" strokeWidth={1} strokeDasharray="18 6" />
        ))}
        {signal.map((run, i) => (
          <polyline key={i} points={pts(run.points)} fill="none" stroke="#000" strokeWidth={5} strokeLinejoin="round" />
        ))}
        {signal.map((run, i) => (
          <polyline key={i} points={pts(run.points)} fill="none" stroke={run.color} strokeWidth={3} strokeLinejoin="round" />
        ))}
        <Label x={10} y={subTop + 8} w={12} size={10} fill="#7d838a">X&gt;</Label>
        <Label x={112} y={subTop + 12} w={44} size={12} fill="#fff" bold>SIGNAL</Label>
        <Label x={162} y={subTop + 12.5} w={47} size={13.5} fill="#ff0000" font={ARIAL} bold>M1 M5</Label>
        <Label x={218} y={subTop + 15} w={98} size={18} fill="#ff0000" font={ARIAL} bold>TREND/DN</Label>
        <Label x={327} y={subTop + 12} w={75} size={12} fill="#fff" bold>MAIN TREND</Label>
        <Label x={407} y={subTop + 12.5} w={89} size={13.5} fill="#ff0000" font={ARIAL} bold>M15 M30 H1</Label>
        <Label x={502} y={subTop + 12.5} w={19} size={13.5} fill="#00ff00" font={ARIAL} bold>H4</Label>
        <Label x={530} y={subTop + 15} w={99} size={18} fill="#ff0000" font={ARIAL} bold>TREND/DN</Label>
        <Label x={638} y={subTop + 12.5} w={52} size={13} fill="#ffff00" bold>MEDIUM</Label>
      </g>

      {/* pane borders */}
      <path
        d={`M6.5 ${plotTop - 0.5}H${right}V${plotBottom + 0.5}H6.5ZM6.5 ${subTop - 0.5}H${right}V${subBottom + 0.5}H6.5Z`}
        fill="none"
        stroke="#b0b3b5"
        strokeWidth={1}
      />

      {timeLabels.map((text, n) => (
        <g key={n}>
          <path d={`M${barX(n * 4) - 0.5} ${subBottom}v4`} stroke="#b0b3b5" strokeWidth={1} />
          <Label x={barX(n * 4) - 2} y={subBottom + 9.5} w={n === 0 ? 45 : 48} size={9.5} fill="#a3abb0">
            {text}
          </Label>
        </g>
      ))}

      {chart.prices.map((text, n) => (
        <g key={text}>
          <path d={`M${right} ${plotTop + 7.5 + n * priceStep}h3`} stroke="#b0b3b5" strokeWidth={1} />
          <Label x={right + 5.5} y={plotTop + 7.5 + n * priceStep} w={text.length === 8 ? 38 : 33} size={10} fill="#989ea2">
            {text}
          </Label>
        </g>
      ))}
      {['200', '100', '0.00', '-100', '-200'].map((text, n) => (
        <Label key={text} x={right + 3} y={levels[n]} size={9.5} fill="#989ea2">
          {text}
        </Label>
      ))}
      <Label x={right + 4} y={subTop + 7} size={9.5} fill="#989ea2">250</Label>
      <Label x={right + 4} y={subBottom - 6.5} size={9.5} fill="#989ea2">-250</Label>
      <rect x={right + 2.5} y={chart.bid - 5.5} width={3832 - right - 2.5} height={11} fill="#b4b6b8" />
      <Label x={right + 5.5} y={chart.bid} w={chart.bidText.length === 8 ? 38 : 33} size={10} fill="#23282c">
        {chart.bidText}
      </Label>
    </svg>
  )
}

function Squeezed({ className, children }: { className?: string; children: ReactNode }) {
  return <span className={clsx('inline-block origin-left scale-x-[.8] whitespace-nowrap', className)}>{children}</span>
}

const pairRows = [
  { name: 'WS30', bid: '30837', pfo: '184', hilo: '430', up: false, cells: [0, 0, 0, 0] },
  { name: 'US500', bid: '3791.1', pfo: '103', hilo: '353', up: false, cells: [0, 0, 0, 0] },
  { name: 'NDX100', bid: '12966', pfo: '39', hilo: '146', up: true, cells: [0, 0, 1, 1] },
  { name: 'US2000', bid: '2068.0', pfo: '279', hilo: '490', up: false, cells: [0, 0, 0, 0] },
]

function PairsTable({ active }: { active: string }) {
  return (
    <div className="absolute top-[127px] left-[17px] h-[146px] w-[369px] border-[3px] border-white bg-[#1e2830] pl-[7px] font-['Liberation_Sans'] font-bold leading-none">
      <div className="mt-1 flex h-[18px] items-center pl-[42px] text-[16px] text-[#c0c0c0]">
        <Squeezed className="w-[31px] scale-x-[.75]">M1</Squeezed>
        <Squeezed className="w-[27px] scale-x-[.75]">M5</Squeezed>
        <Squeezed className="w-[31px] scale-x-[.75]">M15</Squeezed>
        <Squeezed className="w-[35px] scale-x-[.75] text-[#1e90ff]">M30</Squeezed>
        <Squeezed className="w-[31px] scale-x-[.75]">H1</Squeezed>
        <Squeezed className="w-[31px] scale-x-[.75]">H4</Squeezed>
        <Squeezed className="w-[31px] scale-x-[.75]">D1</Squeezed>
        <Squeezed className="w-[27px] scale-x-[.75]">W1</Squeezed>
        <Squeezed className="w-[31px] scale-x-[.75]">MN1</Squeezed>
      </div>
      <div className="mt-0.5 flex h-[19px] items-center text-[17px] text-[#a4a4a4]">
        <Squeezed className="w-[92px] scale-x-[.7]">PAIRS</Squeezed>
        <Squeezed className="w-[60px]">Bid</Squeezed>
        <Squeezed className="w-[44px] scale-x-[.65]">PFO</Squeezed>
        <Squeezed className="w-[50px]">HiLo</Squeezed>
        <Squeezed className="w-[27px]">9</Squeezed>
        <Squeezed className="w-[27px]">18</Squeezed>
        <Squeezed className="w-[27px]">27</Squeezed>
        <Squeezed className="w-[20px]">36</Squeezed>
      </div>
      <div className="mt-px flex flex-col text-[22px]">
        {pairRows.map((row) => (
          <div key={row.name} className="flex h-[22px] items-center">
            <div className="w-[77px]">
              <Squeezed className={clsx('scale-x-[.74]', row.name === active ? 'text-[#1e90ff]' : 'text-white')}>{row.name}</Squeezed>
            </div>
            <div className={clsx('w-[70px]', row.up ? 'text-[#00ff00]' : 'text-[#ee82ee]')}>
              <Squeezed className="scale-x-[.86]">{row.bid}</Squeezed>
            </div>
            <div className={clsx('w-[46px]', row.up ? 'text-[#00ff00]' : 'text-[#ee82ee]')}>
              <Squeezed>{row.pfo}</Squeezed>
            </div>
            <div className="w-[47px] text-[#c0c0c0]">
              <Squeezed className="scale-x-[.86]">{row.hilo}</Squeezed>
            </div>
            <div className="flex gap-[3px]">
              {row.cells.map((blue, i) => (
                <div key={i} className={clsx('h-3 w-6', blue ? 'bg-[#1e90ff]' : 'bg-[#ff8c00]')} />
              ))}
            </div>
          </div>
        ))}
      </div>
    </div>
  )
}

function InfoRow({ label, value, className, valueClass }: { label: string; value: string; className?: string; valueClass?: string }) {
  return (
    <div className={clsx('flex h-4 items-center justify-between pr-[10px] pl-[9px] text-[14.5px]', className)}>
      <span>{label}</span>
      <span className={valueClass}>{value}</span>
    </div>
  )
}

function InfoPanel({ symbol, info, className }: { symbol: string; info: InfoData; className: string }) {
  return (
    <div className={clsx("absolute h-[275px] w-[96px] border border-white bg-[#1c2733] pt-[7px] font-['Liberation_Sans'] font-bold leading-none text-white", className)}>
      <div className="flex h-[25px] items-center justify-end pr-[10px] text-[26px]">
        <span className="origin-right scale-x-[.8]">{symbol}</span>
      </div>
      <div className="flex h-5 items-center justify-end pr-[10px] font-['DejaVu_Sans'] text-[19px] text-[#ee82ee]">{info.last}</div>
      <div className="flex h-[17px] items-center justify-end pr-[14px] font-['DejaVu_Sans_Mono'] text-[14.5px]">SPD:{info.spread}</div>
      <div className="flex h-[18px] items-center justify-end pr-[8px] text-[19px] text-[#ffa500]">00:05:25</div>
      <div className="flex h-4 items-center justify-center font-['DejaVu_Sans_Mono'] text-[14.5px] text-[#ffd700]">Open</div>
      <div className="flex h-[15px] items-center justify-end pr-[18px] font-['DejaVu_Sans'] text-[15px] text-[#ee82ee]">{info.open}</div>
      <div className="flex h-5 items-center justify-center font-['DejaVu_Sans_Mono'] text-[14.5px] text-[#ffd700]">BidRatio</div>
      <div className="mx-[11px] mb-1 flex h-6 items-center justify-end bg-[#dc143c] pr-[6px] text-[25px] text-[#ff90ff]">
        <span className="origin-right scale-x-[.85] font-normal">{info.ratio}</span>
      </div>
      <InfoRow label="PFO" value={info.pfo} valueClass="text-[#ee82ee]" />
      <InfoRow label="HiLo" value={info.hilo} className="text-[#c0c0c0]" />
      <InfoRow label="ADR" value={info.adr} valueClass={info.adrClass} />
      <InfoRow label="61%" value={info.r61} />
      <InfoRow label="38%" value={info.r38} />
      <div className="flex justify-end pr-[10px]">
        <span className="pt-px text-[19px] text-[#ee82ee]">{info.pct}</span>
        <span className="text-[11.5px] font-normal">ADR</span>
      </div>
    </div>
  )
}

function SessionClocks({ symbol }: { symbol: string }) {
  return (
    <div className="absolute top-[9px] left-[9px] flex h-4 items-center gap-0.5 font-['Noto_Sans'] text-[14.5px] leading-none font-bold text-white">
      <svg className="h-[5px] w-[9px]" viewBox="0 0 9 5">
        <path d="M1 0H8L4.500 5Z" fill="#a9afb5" />
      </svg>
      <span className="w-[63px] pl-0.5 text-[9.5px] font-normal text-[#8b93a0]">{symbol},M30</span>
      <span className="flex h-4 w-[155px] items-center justify-center bg-[#962020] whitespace-pre">HONG KONG 02:24</span>
      <span className="flex h-4 w-[132px] items-center justify-center bg-[#962020] whitespace-pre">LONDON  18:24</span>
      <span className="flex h-4 w-[149px] items-center justify-center bg-[#0078d7] whitespace-pre">NEW YORK  13:24</span>
    </div>
  )
}

function ToggleButtons() {
  return (
    <>
      <div className="absolute top-[822px] left-[10px] flex h-6 w-[39px] items-center justify-center rounded-[2px] border border-[#6b6b6b] bg-[#141414] font-['Noto_Sans'] text-[14px] text-[#7d7d7d]">
        ON
      </div>
      <div className="absolute top-[850px] left-[205px] flex h-[25px] font-['Liberation_Sans'] text-[19px] leading-none font-bold text-[#c0b4b4]">
        <button className="mr-1 flex w-[38px] items-center justify-center rounded-[2px] bg-[#8b0000]"><span className="scale-x-[.75]">ZZ1</span></button>
        <button className="mr-[46px] flex w-[38px] items-center justify-center rounded-[2px] bg-[#8b0000]"><span className="scale-x-[.75]">ZZ2</span></button>
        <button className="mr-[5px] flex w-[55px] items-center justify-center rounded-[2px] bg-[#8b0000] text-[#857878]"><span className="scale-x-[.75]">VWAP</span></button>
        <button className="flex w-[66px] items-center justify-center rounded-[2px] bg-[#8b0000]"><span className="scale-x-[.78] whitespace-nowrap">ADR D1</span></button>
      </div>
    </>
  )
}

function ChartWindow({ chart, infoClass }: { chart: ChartConfig; infoClass: string }) {
  return (
    <section className="relative h-[1047px] w-[3840px] border-r-[3px] border-[#e4dfda] bg-[#23282c]">
      <div className="absolute inset-x-0 top-0 h-1 border-y border-[#6d6f70] bg-[#3a3d40]" />
      <div className="absolute inset-y-0 left-0 w-[3px] bg-[#6d6f70]" />
      <div className="relative">
        <ChartCanvas chart={chart} />
      </div>
      <SessionClocks symbol={chart.symbol} />
      <PairsTable active={chart.symbol} />
      <ToggleButtons />
      <InfoPanel symbol={chart.symbol} info={chart.info} className={infoClass} />
      <div className="absolute inset-x-0 bottom-0 h-0.5 bg-[#f4f2ee]" />
    </section>
  )
}

function Wallpaper() {
  return (
    <svg className="block h-4 w-[3840px]" viewBox="0 0 3840 16">
      <defs>
        <linearGradient id="sky">
          <stop offset="0" stopColor="#041a4a" />
          <stop offset=".3" stopColor="#06285c" />
          <stop offset=".6" stopColor="#0b3c78" />
          <stop offset="1" stopColor="#104482" />
        </linearGradient>
      </defs>
      <rect width={3840} height={16} fill="url(#sky)" />
      <path d="M3440 0H3720L3690 16H3480Z" fill="#1f5d97" />
      <path d="M1250 0H1420L1390 16H1220Z M2200 0H2230V16H2200Z M2765 0H2820V16H2765Z" fill="#0a2f68" />
      <path d="M633 0H643L638 16H628Z M653 0H662L657 16H648Z M1718 0H1732L1718 16H1704Z M2460 16Q2484 0 2508 16Z" fill="#43a3ef" />
      <path d="M3268 0H3300L3276 16H3252Z M3060 0H3078L3110 16H3088Z M3395 16L3406 11L3418 16Z M3775 16L3792 5L3812 16Z" fill="#2f78b0" />
      <path d="M571 0h4v8h-4Z M2541 0h6v8h-6Z M3197 0h4v8h-4Z M1210 0h4v8h-4Z" fill="#1193a8" />
    </svg>
  )
}

function MenuBar() {
  return (
    <nav className="flex h-[19px] items-center gap-[17px] bg-[#d4d0c8] pl-[6px] font-['Noto_Sans'] text-[10.5px] leading-none text-black">
      {['File', 'View', 'Insert', 'Charts', 'Tools', 'Window', 'Help'].map((item) => (
        <span key={item}>
          <u>{item[0]}</u>
          {item.slice(1)}
        </span>
      ))}
    </nav>
  )
}

function StatusBar() {
  return (
    <footer className="flex h-[26px] items-center border-b border-[#404040] bg-[#d4d0c8] pt-1 font-['Noto_Sans'] text-[10.5px] leading-none text-black">
      <span className="w-[3152px] pl-0.5">For Help, press F1</span>
      <span className="flex h-5 w-[117px] items-center border-l-2 border-[#808080] pl-1">XARD UNIVERSE</span>
      <span className="h-5 w-[100px] border-l-2 border-[#808080]" />
      <span className="h-5 w-[70px] border-l-2 border-[#808080]" />
      <span className="h-5 w-[70px] border-l-2 border-[#808080]" />
      <span className="h-5 w-[68px] border-l-2 border-[#808080]" />
      <span className="h-5 w-[69px] border-l-2 border-[#808080]" />
      <span className="h-5 w-[66px] border-l-2 border-[#808080]" />
      <span className="flex h-5 items-center gap-1 border-l-2 border-[#808080] pl-[3px]">
        <svg className="h-[13px] w-[23px]" viewBox="0 0 23 13">
          <path d="M0 0h2v9H0ZM3 0h2v8H3ZM6 0h2v8H6ZM9 0h2v7H9ZM12 0h2v6h-2ZM15 0h2v6h-2ZM18 0h2v5h-2ZM21 0h2v4h-2Z" fill="#5b7d14" />
          <path d="M0 10h2v3H0ZM3 9h2v4H3ZM6 9h2v4H6ZM9 8h2v5H9ZM12 7h2v6h-2ZM15 7h2v6h-2ZM18 6h2v7h-2ZM21 5h2v8h-2Z" fill="#0b4a72" />
        </svg>
        11225/4 kb
      </span>
    </footer>
  )
}

export default function App() {
  return (
    <div className="flex h-[2160px] w-[3840px] flex-col overflow-hidden bg-[#23282c]">
      <Wallpaper />
      <div className="h-[5px] bg-[#dcdee3]" />
      <MenuBar />
      <ChartWindow chart={ws30} infoClass="top-[17px] left-[3681px]" />
      <ChartWindow chart={us500} infoClass="top-[17px] left-[3686px]" />
      <StatusBar />
    </div>
  )
}
